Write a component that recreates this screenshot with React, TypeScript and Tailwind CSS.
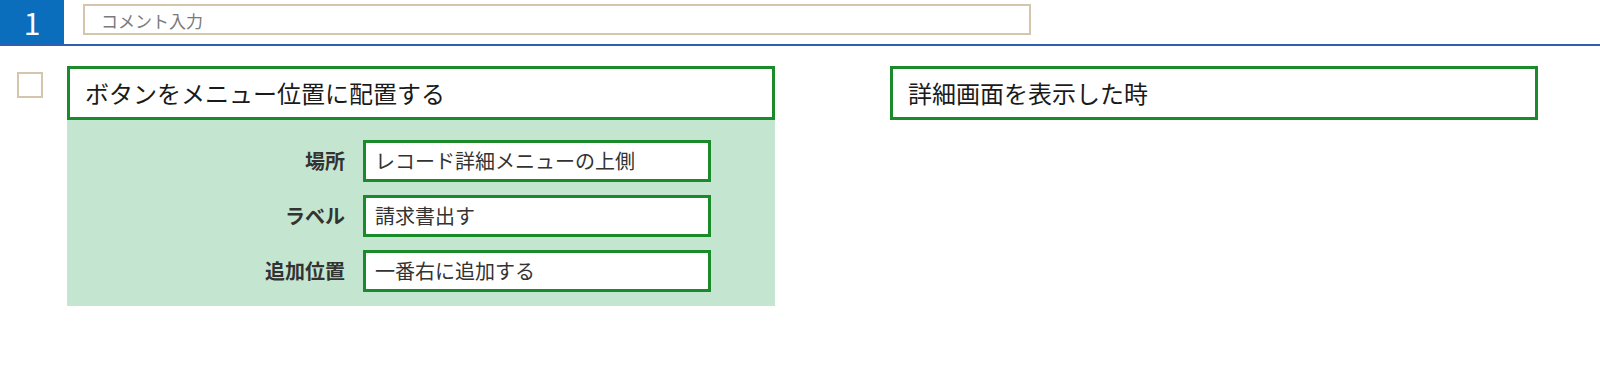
const font = { fontFamily: '"Noto Sans CJK JP", "Noto Sans", sans-serif' };

const fields = [
  { label: "場所", value: "レコード詳細メニューの上側" },
  { label: "ラベル", value: "請求書出す" },
  { label: "追加位置", value: "一番右に追加する" },
];

export default function App() {
  return (
    <div className="w-[1600px] h-[366px] bg-white" style={font}>
      {/* header row */}
      <div className="flex h-[46px] border-b-2 border-[#2f5fae]">
        <div className="w-[64px] h-[44px] bg-[#0a6ebd] flex items-center justify-center text-white text-[30px] leading-none">
          1
        </div>
        <div className="pl-[19px] pt-[4px]">
          <div className="w-[948px] h-[31px] border-2 border-[#d6c5ad] flex items-center pl-[16px] pt-[3px] text-[17px] text-[#7a7a7a]">
            コメント入力
          </div>
        </div>
      </div>

      {/* body */}
      <div className="flex pt-[20px]">
        <div className="w-[67px] pl-[17px] pt-[6px]">
          <div className="w-[26px] h-[26px] border-2 border-[#d6c5ad]" />
        </div>

        <div className="w-[708px]">
          <div className="h-[54px] border-[3px] border-[#1a8a2a] flex items-center pl-[15px] text-[24px] text-[#1a1a1a]">
            ボタンをメニュー位置に配置する
          </div>
          <div className="bg-[#c4e6d0] h-[186px] pt-[20px] flex flex-col gap-[13px]">
            {fields.map((f) => (
              <div key={f.label} className="flex items-center">
                <div className="w-[296px] text-right pr-[18px] text-[20px] font-bold text-[#333]">
                  {f.label}
                </div>
                <div className="w-[348px] h-[42px] bg-white border-[3px] border-[#1a8a2a] flex items-center pl-[9px] text-[20px] text-[#333]">
                  {f.value}
                </div>
              </div>
            ))}
          </div>
        </div>

        <div className="ml-[115px] w-[648px] h-[54px] border-[3px] border-[#1a8a2a] flex items-center pl-[15px] text-[24px] text-[#1a1a1a]">
          詳細画面を表示した時
        </div>
      </div>
    </div>
  );
}
